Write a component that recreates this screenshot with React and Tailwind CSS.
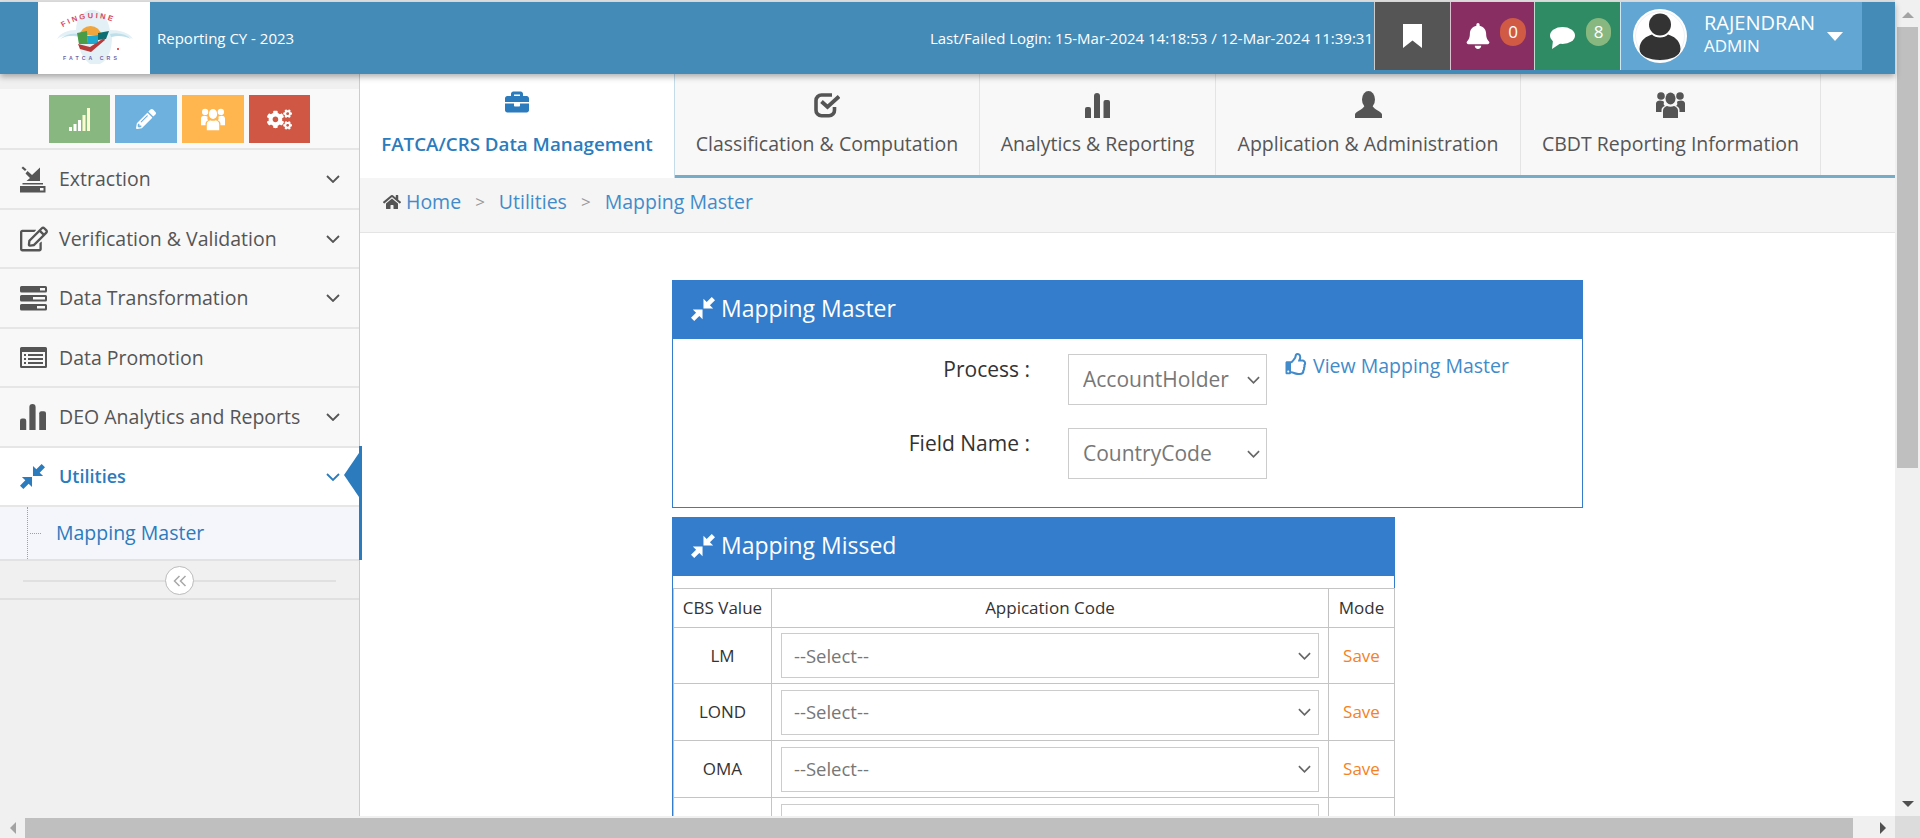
import React from "react";
import { FaBriefcase, FaHome, FaCogs, FaPencilAlt, FaBell, FaRegEdit, FaRegThumbsUp } from "react-icons/fa";

function Compress({ className }) {
  return (
    <svg viewBox="0 0 26 26" className={className} fill="currentColor">
      <path d="M13.5 12.5 L13.5 2 L17 5.5 L22.5 0 L26 3.5 L20.5 9 L24 12.5 Z" />
      <path d="M12.5 13.5 L12.5 24 L9 20.5 L3.5 26 L0 22.5 L5.5 17 L2 13.5 Z" />
    </svg>
  );
}
function Chev({ className }) {
  return (
    <svg viewBox="0 0 14 8" className={className} fill="none" stroke="currentColor" strokeWidth="1.8">
      <path d="M1 1 L7 7 L13 1" />
    </svg>
  );
}
function ExtractionIcon({ className }) {
  return (
    <svg viewBox="0 0 26 27" className={className} fill="currentColor">
      <path d="M3 0.5 L6.5 3.5 L5 5 L1.5 2 Z" />
      <path d="M7.5 5 L12 9 L20 1.5 L20 15 L6.5 15 L10 12 L5.5 7.5 Z" />
      <path fillRule="evenodd" d="M0 20 H25.5 V26.5 H0 Z M20 22 H23.5 V24.5 H20 Z" />
      <path d="M2.5 17 H23 V18.5 H2.5 Z" />
    </svg>
  );
}
function ServerIcon({ className }) {
  return (
    <svg viewBox="0 0 27 25" className={className} fill="currentColor" fillRule="evenodd">
      <path d="M1.5 0 H25.5 A1.5 1.5 0 0 1 27 1.5 V5 A1.5 1.5 0 0 1 25.5 6.5 H1.5 A1.5 1.5 0 0 1 0 5 V1.5 A1.5 1.5 0 0 1 1.5 0 Z M20 2 V4.5 H25 V2 Z" />
      <path d="M1.5 9 H25.5 A1.5 1.5 0 0 1 27 10.5 V14 A1.5 1.5 0 0 1 25.5 15.5 H1.5 A1.5 1.5 0 0 1 0 14 V10.5 A1.5 1.5 0 0 1 1.5 9 Z M13 11 V13.5 H25 V11 Z" />
      <path d="M1.5 18 H25.5 A1.5 1.5 0 0 1 27 19.5 V23 A1.5 1.5 0 0 1 25.5 24.5 H1.5 A1.5 1.5 0 0 1 0 23 V19.5 A1.5 1.5 0 0 1 1.5 18 Z M17 20 V22.5 H25 V20 Z" />
    </svg>
  );
}
function ListWindow({ className }) {
  return (
    <svg viewBox="0 0 27 21" className={className} fill="currentColor" fillRule="evenodd">
      <path d="M1.5 0 H25.5 A1.5 1.5 0 0 1 27 1.5 V19.5 A1.5 1.5 0 0 1 25.5 21 H1.5 A1.5 1.5 0 0 1 0 19.5 V1.5 A1.5 1.5 0 0 1 1.5 0 Z M2 5 V19 H25 V5 Z" />
      <path d="M4 7 H6 V9 H4 Z M8 7 H23 V9 H8 Z M4 11 H6 V13 H4 Z M8 11 H23 V13 H8 Z M4 15 H6 V17 H4 Z M8 15 H23 V17 H8 Z" />
    </svg>
  );
}
function Bars({ className }) {
  return (
    <svg viewBox="0 0 25 25" className={className} fill="currentColor">
      <path d="M0 25 V16 A2 2 0 0 1 2 14 H4 A2 2 0 0 1 6 16 V25 Z" />
      <path d="M9 25 V3 A3 3 0 0 1 15 3 V25 Z" />
      <path d="M18.5 25 V9 A2 2 0 0 1 20.5 7 H23 A2 2 0 0 1 25 9 V25 Z" />
    </svg>
  );
}
function CheckBox({ className }) {
  return (
    <svg viewBox="0 0 26 25" className={className} fill="none" stroke="currentColor">
      <path d="M20.5 14 V17 A5.5 5.5 0 0 1 15 22.8 H7.5 A5.5 5.5 0 0 1 2 17 V7.5 A5.5 5.5 0 0 1 7.5 2 H18" strokeWidth="3.6" />
      <path d="M7.5 8.5 L13.5 14 L25 3.5" strokeWidth="3.8" />
    </svg>
  );
}
function Person({ className }) {
  return (
    <svg viewBox="0 0 27 27" className={className} fill="currentColor">
      <ellipse cx="13.5" cy="8.5" rx="6.5" ry="8.5" />
      <path d="M0 27 V23.5 C0 20.5 8 19 10 14 H17 C19 19 27 20.5 27 23.5 V27 Z" />
    </svg>
  );
}
function People({ className }) {
  return (
    <svg viewBox="0 0 29 27" className={className} fill="currentColor">
      <circle cx="5" cy="5" r="3.8" />
      <circle cx="24" cy="5" r="3.8" />
      <ellipse cx="14.5" cy="7.5" rx="5" ry="6" />
      <path d="M0 21 V12.5 C0 10.5 2 9.5 4 9.5 C6 9.5 8 10.5 8 11 C7.5 13 7.5 14 9 15 C7 15.5 5.5 17 5.5 19 V21 Z" />
      <path d="M29 21 V12.5 C29 10.5 27 9.5 25 9.5 C23 9.5 21 10.5 21 11 C21.5 13 21.5 14 20 15 C22 15.5 23.5 17 23.5 19 V21 Z" />
      <path d="M7 27 V19.5 C7 17 9.5 15.5 11 15 C13 16 16 16 18 15 C19.5 15.5 22 17 22 19.5 V27 Z" />
    </svg>
  );
}
function Signal({ className }) {
  return (
    <svg viewBox="0 0 22 24" className={className}>
      <rect x="0" y="20" width="3" height="4" fill="#fff" />
      <rect x="4.5" y="17" width="3" height="7" fill="#fff" />
      <rect x="9" y="13" width="3" height="11" fill="#fff" />
      <rect x="13.5" y="8" width="3" height="16" fill="#fffbd0" />
      <rect x="18" y="1" width="3" height="23" fill="#fffbd0" />
    </svg>
  );
}
function Silhouette() {
  return (
    <svg viewBox="0 0 54 54" className="w-[54px] h-[54px] shrink-0">
      <circle cx="27" cy="27" r="27" fill="#fff" />
      <circle cx="27" cy="27" r="24.5" fill="none" stroke="#dfe7ee" strokeWidth="0.6" />
      <circle cx="27" cy="15.5" r="11" fill="#333" />
      <path d="M6.5 40 C6.5 31 14 27 19 25.5 C22 29.5 32 29.5 35 25.5 C40 27 47.5 31 47.5 40 C47.5 47 38 51 27 51 C16 51 6.5 47 6.5 40 Z" fill="#333" />
    </svg>
  );
}
function Logo() {
  return (
    <svg viewBox="0 0 112 72" className="w-[112px] h-[72px]">
      <path d="M19 37 C22 31 30 28 38 28 C38 16 46 8 54 8 C63 8 70 16 72 28 C82 28 92 31 95 37 C88 33 80 33 74 35 C74 48 70 58 62 62 L52 62 C44 56 40 46 40 35 C32 33 24 33 19 37 Z" fill="#e3f0f6" />
      <path d="M22 37 C28 32 34 31 40 32 L40 34 C33 33 27 34 22 37 Z" fill="#bcdfe9" />
      <path d="M72 32 C80 30 88 32 93 37 C87 34 80 33 73 35 Z" fill="#bcdfe9" />
      <path d="M42 33 A10.5 9 0 0 1 63 33 Z" fill="#efa63e" />
      <path d="M39 31 L49 29 L50 42 L41 42 Z" fill="#4a9c46" />
      <path d="M49 34 L60 33 L60 42 L50 42 Z" fill="#1ea7cf" />
      <path d="M60 31 L71 29 L68 37 L60 38 Z" fill="#0d6f73" />
      <path d="M40 42 L52 45 L66 36 L67 38 L53 50 L42 47 Z" fill="#b73a3a" />
      <circle cx="80" cy="47" r="1" fill="#e02020" />
      <path id="logo-arc" d="M24 26 Q55 6 87 26" fill="none" />
      <text fontFamily="'Liberation Sans',sans-serif" fontSize="7.5" fontWeight="700" fill="#d84a62" letterSpacing="2.2">
        <textPath href="#logo-arc" startOffset="1">FINGUINE</textPath>
      </text>
      <text x="25" y="58" fontFamily="'Liberation Sans',sans-serif" fontSize="5.2" fontWeight="700" fill="#6c63a8" letterSpacing="3.1">FATCA CRS</text>
    </svg>
  );
}

const sideItems = [
  { label: "Extraction", icon: <ExtractionIcon className="w-[26px] h-[27px]" />, h: "h-[60px]", chev: true },
  { label: "Verification & Validation", icon: <FaRegEdit className="w-[28px] h-[26px]" />, h: "h-[59px]", chev: true },
  { label: "Data Transformation", icon: <ServerIcon className="w-[27px] h-[25px]" />, h: "h-[60px]", chev: true },
  { label: "Data Promotion", icon: <ListWindow className="w-[27px] h-[21px]" />, h: "h-[59px]" },
  { label: "DEO Analytics and Reports", icon: <Bars className="w-[26px] h-[26px]" />, h: "h-[60px]", chev: true },
];

const tabs = [
  { label: "FATCA/CRS Data Management", icon: <FaBriefcase className="w-[28px] h-[24px] mb-[4px]" />, w: "w-[315px]", active: true },
  { label: "Classification & Computation", icon: <CheckBox className="w-[26px] h-[25px]" />, w: "w-[305px]" },
  { label: "Analytics & Reporting", icon: <Bars className="w-[25px] h-[25px]" />, w: "w-[236px]" },
  { label: "Application & Administration", icon: <Person className="w-[27px] h-[27px]" />, w: "w-[305px]" },
  { label: "CBDT Reporting Information", icon: <People className="w-[29px] h-[27px]" />, w: "w-[300px]" },
];

const rows = ["LM", "LOND", "OMA", ""];
const rowHeights = ["h-[56px]", "h-[57px]", "h-[57px]", "h-[57px]"];

function Select({ value, className, selectClass, chevClass }) {
  return (
    <div className={`relative shrink-0 ${className}`}>
      <select
        defaultValue={value}
        className={`w-full h-full block appearance-none border border-[#ccc] bg-white text-[#777] rounded-none outline-none ${selectClass}`}
      >
        <option>{value}</option>
      </select>
      <Chev className={`absolute top-1/2 -translate-y-1/2 h-[8px] text-[#666] pointer-events-none ${chevClass}`} />
    </div>
  );
}

function NotifyBox({ color, w, children }) {
  return (
    <div className={`h-[68px] ${w} ${color} border-l border-white/70 flex items-center relative shrink-0`}>
      {children}
    </div>
  );
}

export default function App() {
  return (
    <div className="w-[1920px] h-[838px] overflow-hidden flex flex-col bg-white text-[#333] font-['Open_Sans',sans-serif]">
      <div className="flex flex-1 min-h-0">
        <div className="flex-1 flex flex-col min-w-0 relative">
          {/* Header */}
          <div className="h-[2px] bg-[#e0e0e0] shrink-0" />
          <header className="h-[72px] shrink-0 bg-[#458bb8] flex items-start pl-[38px] pr-[33px] text-white relative z-20 shadow-[0_3px_6px_rgba(0,0,0,0.3)]">
            <div className="w-[112px] h-[72px] bg-white shrink-0"><Logo /></div>
            <div className="ml-[7px] h-[72px] flex items-center text-[15px]">Reporting CY - 2023</div>
            <div className="ml-auto mr-[1px] h-[72px] flex items-center text-[15px] whitespace-nowrap">Last/Failed Login: 15-Mar-2024 14:18:53 / 12-Mar-2024 11:39:31</div>
            <NotifyBox color="bg-[#555555]" w="w-[76px]">
              <svg viewBox="0 0 19 24" className="w-[19px] h-[24px] ml-[28px]" fill="currentColor"><path d="M0 0 H19 V24 L9.5 16.5 L0 24 Z" /></svg>
            </NotifyBox>
            <NotifyBox color="bg-[#892e62]" w="w-[84px]">
              <FaBell className="w-[24px] h-[26px] ml-[15px]" />
              <span className="absolute left-[49px] top-[16px] w-[26px] h-[28px] rounded-full bg-[#d05a44] flex items-center justify-center text-[17px]">0</span>
            </NotifyBox>
            <NotifyBox color="bg-[#2e8b63]" w="w-[86px]">
              <svg viewBox="0 0 25 22" className="w-[25px] h-[22px] ml-[15px] mt-[4px]" fill="currentColor">
                <ellipse cx="12.5" cy="8.5" rx="12.5" ry="8.5" />
                <path d="M3 13 L2 22 L11 16 Z" />
              </svg>
              <span className="absolute left-[51px] top-[16px] w-[25px] h-[28px] rounded-full bg-[#88b87f] flex items-center justify-center text-[17px]">8</span>
            </NotifyBox>
            <div className="h-[68px] w-[242px] bg-[#62a7d3] border-l border-white/70 flex items-center pl-[12px] shrink-0">
              <Silhouette />
              <div className="ml-[17px] flex flex-col w-[125px] -mt-[7px]">
                <span className="text-[20px] leading-[26px]">RAJENDRAN</span>
                <span className="text-[17px] leading-[19px]">ADMIN</span>
              </div>
              <span className="w-0 h-0 border-l-[8px] border-r-[8px] border-t-[9px] border-l-transparent border-r-transparent border-t-white -ml-[2px]" />
            </div>
          </header>

          <div className="flex flex-1 min-h-0">
            {/* Sidebar */}
            <aside className="w-[360px] shrink-0 bg-[#f0f0f0] border-r border-[#ccc] relative">
              <div className="h-[15px]" />
              <div className="h-[61px] bg-[#f9f9f9] border-b-2 border-[#e6e6e6] flex items-start pt-[6px] pl-[49px] gap-[5px] text-white">
                <div className="w-[61px] h-[48px] bg-[#88b87f] flex items-center justify-center"><Signal className="w-[22px] h-[24px]" /></div>
                <div className="w-[62px] h-[48px] bg-[#6eb0de] flex items-center justify-center"><FaPencilAlt className="w-[20px] h-[20px]" /></div>
                <div className="w-[62px] h-[48px] bg-[#ffb64f] flex items-center justify-center"><People className="w-[24px] h-[24px]" /></div>
                <div className="w-[61px] h-[48px] bg-[#d05744] flex items-center justify-center"><FaCogs className="w-[25px] h-[23px]" /></div>
              </div>
              {sideItems.map((it) => (
                <div key={it.label} className={`${it.h} bg-[#f8f8f8] border-b-2 border-[#e6e6e6] flex items-center text-[#555]`}>
                  <div className="w-[59px] pl-[20px] flex items-center shrink-0">{it.icon}</div>
                  <span className="text-[19.5px] whitespace-nowrap">{it.label}</span>
                  {it.chev && <Chev className="ml-auto mr-[19px] w-[14px] h-[8px]" />}
                </div>
              ))}
              <div className="h-[59px] bg-white border-b-2 border-[#e6e6e6] flex items-center text-[#2b7bbd]">
                <div className="w-[59px] pl-[20px] flex items-center shrink-0"><Compress className="w-[25px] h-[25px]" /></div>
                <span className="text-[18px] font-semibold">Utilities</span>
                <Chev className="ml-auto mr-[19px] w-[14px] h-[8px]" />
              </div>
              <div className="h-[54px] bg-[#f4f6fb] border-b-2 border-[#e2e2e2] flex items-center text-[#2b7bbd] relative">
                <span className="absolute left-[27px] top-0 bottom-0 border-l border-dotted border-[#8aa]" />
                <span className="absolute left-[30px] top-[26px] w-[11px] border-t border-dotted border-[#8aa]" />
                <span className="ml-[56px] text-[19.5px]">Mapping Master</span>
              </div>
              <div className="h-[39px] border-b-2 border-[#e0e0e0] relative flex items-start pt-[19px] px-[23px]">
                <div className="w-full border-t-2 border-[#e0e0e0]" />
                <div className="absolute left-[165px] top-[5px] w-[29px] h-[29px] rounded-full bg-white border border-[#bbb] flex items-center justify-center text-[#a8a8a8]">
                  <svg viewBox="0 0 14 12" className="w-[14px] h-[12px]" fill="none" stroke="currentColor" strokeWidth="1.5"><path d="M6.5 1 L1.5 6 L6.5 11 M12.5 1 L7.5 6 L12.5 11" /></svg>
                </div>
              </div>
              {/* Active marker */}
              <div className="absolute left-[359px] top-[372px] w-[3px] h-[114px] bg-[#2b7bbd]" />
              <div className="absolute left-[344px] top-[379px] w-0 h-0 border-y-[22px] border-r-[15px] border-y-transparent border-r-[#2b7bbd]" />
            </aside>

            {/* Main */}
            <main className="flex-1 min-w-0 flex flex-col">
              <nav className="h-[104px] shrink-0 bg-[#f8f8f8] border-b-[3px] border-[#77acc9] flex items-start">
                {tabs.map((t) => (
                  <div key={t.label} className={`${t.w} shrink-0 flex flex-col items-center pt-[17px] ${t.active ? "bg-white text-[#2b7bbd] h-[104px] border-r border-[#c5dbe8] relative" : "h-[101px] text-[#555] border-r border-[#e4e4e4]"}`}>
                    <div className="h-[27px] flex items-end">{t.icon}</div>
                    <span className={`mt-[11px] whitespace-nowrap ${t.active ? "text-[18.75px] font-semibold leading-[29px]" : "text-[19.5px] leading-[29px]"}`}>{t.label}</span>
                  </div>
                ))}
              </nav>
              <div className="h-[55px] shrink-0 bg-[#f5f5f5] border-b border-[#e4e4e4] flex items-center pl-[23px] pb-[6px] text-[19.5px] text-[#428bca]">
                <FaHome className="w-[18px] h-[16px] text-[#555] mr-[5px]" />
                <span>Home</span>
                <span className="mx-[14px] text-[#999] text-[17px]">&gt;</span>
                <span>Utilities</span>
                <span className="mx-[14px] text-[#999] text-[17px]">&gt;</span>
                <span>Mapping Master</span>
              </div>

              <div className="pl-[312px] pt-[47px] flex-1 min-h-0 overflow-hidden">
                {/* Mapping Master panel */}
                <section className="w-[911px] h-[228px] border border-[#337dcc]">
                  <div className="h-[59px] -mt-px -mx-px bg-[#337dcc] text-white flex items-center pl-[19px] pb-[2px] text-[23px]">
                    <Compress className="w-[24px] h-[24px] mr-[6px]" />
                    <span>Mapping Master</span>
                  </div>
                  <div className="flex pt-[15px]">
                    <div className="w-[595px] shrink-0 flex flex-col gap-[23px]">
                      <div className="flex items-start">
                        <span className="w-[357px] shrink-0 text-right text-[21px] leading-[27px] mt-[2px]">Process :</span>
                        <Select value="AccountHolder" className="ml-[38px] w-[199px] h-[51px]" selectClass="pl-[14px] pr-[28px] text-[21px]" chevClass="right-[7px] w-[13px]" />
                      </div>
                      <div className="flex items-start">
                        <span className="w-[357px] shrink-0 text-right text-[21px] leading-[27px] mt-[2px]">Field Name :</span>
                        <Select value="CountryCode" className="ml-[38px] w-[199px] h-[51px]" selectClass="pl-[14px] pr-[28px] text-[21px]" chevClass="right-[7px] w-[13px]" />
                      </div>
                    </div>
                    <div className="ml-[17px] flex items-start text-[#428bca] text-[19.5px] leading-[27px] whitespace-nowrap -mt-[2px]">
                      <FaRegThumbsUp className="w-[23px] h-[22px] mr-[5px] mt-[1px]" />
                      <span>View Mapping Master</span>
                    </div>
                  </div>
                </section>

                {/* Mapping Missed panel */}
                <section className="w-[723px] mt-[9px] border-x border-[#337dcc]">
                  <div className="h-[59px] -mx-px bg-[#337dcc] text-white flex items-center pl-[19px] pb-[2px] text-[23px]">
                    <Compress className="w-[24px] h-[24px] mr-[6px]" />
                    <span>Mapping Missed</span>
                  </div>
                  <div className="h-[12px]" />
                  <table className="w-[721px] table-fixed border-collapse text-[17px]">
                    <colgroup>
                      <col className="w-[98px]" />
                      <col className="w-[557px]" />
                      <col className="w-[66px]" />
                    </colgroup>
                    <thead>
                      <tr className="h-[39px]">
                        <th className="border border-[#c4c4c4] font-normal whitespace-nowrap">CBS Value</th>
                        <th className="border border-[#c4c4c4] font-normal">Appication Code</th>
                        <th className="border border-[#c4c4c4] font-normal">Mode</th>
                      </tr>
                    </thead>
                    <tbody>
                      {rows.map((code, i) => (
                        <tr key={i} className={rowHeights[i]}>
                          <td className="border border-[#c4c4c4] text-center">{code}</td>
                          <td className="border border-[#c4c4c4] px-[9px]">
                            <Select value="--Select--" className="w-[538px] h-[45px]" selectClass="pl-[12px] text-[18.5px]" chevClass="right-[8px] w-[13px]" />
                          </td>
                          <td className="border border-[#c4c4c4] text-center text-[#f5821f]">Save</td>
                        </tr>
                      ))}
                    </tbody>
                  </table>
                </section>
              </div>
            </main>
          </div>
        </div>

        {/* Vertical scrollbar */}
        <div className="w-[25px] shrink-0 bg-[#f0f0f0] flex flex-col items-center relative">
          <div className="mt-[12px] w-0 h-0 border-x-[6px] border-b-[6px] border-x-transparent border-b-[#a3a3a3]" />
          <div className="mt-[9px] w-[21px] h-[441px] bg-[#bfbfbf]" />
          <div className="absolute bottom-[9px] w-0 h-0 border-x-[6px] border-t-[6px] border-x-transparent border-t-[#505050]" />
        </div>
      </div>

      {/* Horizontal scrollbar */}
      <div className="h-[22px] shrink-0 flex bg-[#f0f0f0]">
        <div className="flex-1 flex items-end relative">
          <div className="w-[25px] h-[20px] flex items-center justify-center">
            <div className="w-0 h-0 border-y-[6px] border-r-[6px] border-y-transparent border-r-[#a3a3a3]" />
          </div>
          <div className="w-[1828px] h-[20px] bg-[#bfbfbf]" />
          <div className="ml-auto mr-[9px] mb-[4px] w-0 h-0 border-y-[6px] border-l-[6px] border-y-transparent border-l-[#505050]" />
        </div>
        <div className="w-[25px] bg-[#dcdcdc]" />
      </div>
    </div>
  );
}
